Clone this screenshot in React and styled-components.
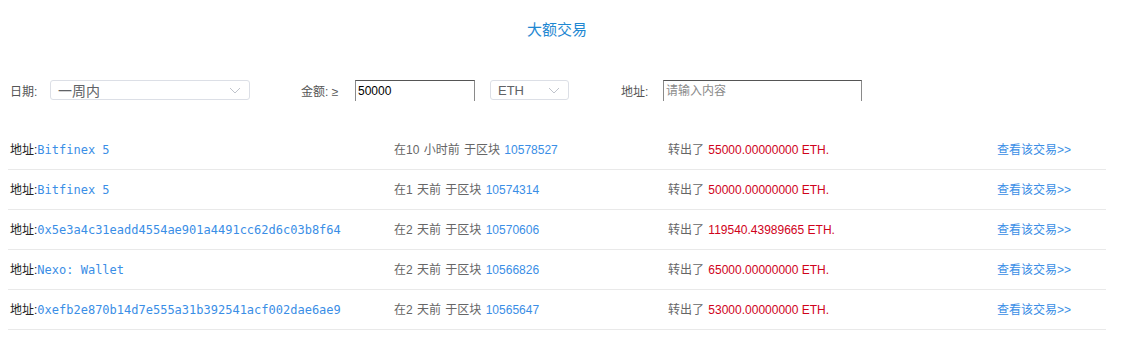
import React from "react";
import styled, { createGlobalStyle } from "styled-components";

const GlobalStyle = createGlobalStyle`
  body {
    margin: 8px;
    background: #fff;
    font-family: "Liberation Sans", "Noto Sans CJK SC", sans-serif;
  }
`;

const Page = styled.div`
  width: 1098px;
`;

const Title = styled.h2`
  margin: 0;
  height: 44px;
  line-height: 44px;
  text-align: center;
  font-size: 15px;
  font-weight: normal;
  color: #1f88d2;
`;

const FilterBar = styled.div`
  display: flex;
  align-items: center;
  margin-top: 27px;
  padding-left: 2px;
  height: 22px;
`;

const Field = styled.div`
  display: flex;
  align-items: center;
  margin-left: ${(p) => p.$offset || 0}px;
`;

const Label = styled.span`
  width: ${(p) => p.$width}px;
  font-size: 12px;
  color: #555;
  white-space: nowrap;
`;

const SelectBox = styled.div`
  box-sizing: border-box;
  width: ${(p) => p.$width}px;
  height: 20px;
  margin-left: ${(p) => p.$gap || 0}px;
  border: 1px solid #dcdfe6;
  border-radius: 3px;
  display: flex;
  align-items: center;
  justify-content: space-between;
  padding: 0 8px 0 7px;
  font-size: ${(p) => p.$size || 14}px;
  color: #606266;
`;

const TextInput = styled.input`
  box-sizing: border-box;
  width: ${(p) => p.$width}px;
  height: 21px;
  margin: 0;
  padding: 0 2px;
  border: 1px solid #8a8a8a;
  border-top-color: #555;
  border-bottom: none;
  outline: none;
  font-family: "Liberation Sans", "Noto Sans CJK SC", sans-serif;
  font-size: 12px;
  color: #000;
  &::placeholder {
    color: #8a8a8a;
  }
`;

const List = styled.div`
  margin-top: 29px;
`;

const Row = styled.div`
  display: grid;
  grid-template-columns: 386px 274px 329px 1fr;
  align-items: center;
  height: 36px;
  padding-bottom: 3px;
  border-bottom: 1px solid #e9e9e9;
  font-size: 12px;
`;

const AddressCell = styled.div`
  padding-left: 2px;
  color: #222;
  white-space: nowrap;
`;

const Mono = styled.span`
  font-family: "DejaVu Sans Mono", monospace;
  color: #3a8ee6;
`;

const Muted = styled.div`
  color: #666;
  white-space: nowrap;
  word-spacing: 1px;
`;

const Blue = styled.span`
  color: #3a8ee6;
`;

const Red = styled.span`
  color: #d0021b;
  word-spacing: 0;
`;

const Link = styled.a`
  color: #3a8ee6;
  text-decoration: none;
`;

const Chevron = () => (
  <svg width="12" height="7" viewBox="0 0 12 7">
    <polyline points="1,1 6,6 11,1" fill="none" stroke="#c0c4cc" strokeWidth="1" />
  </svg>
);

const rows = [
  { addr: "Bitfinex 5", time: "在10 小时前", block: "10578527", amount: "55000.00000000" },
  { addr: "Bitfinex 5", time: "在1 天前", block: "10574314", amount: "50000.00000000" },
  { addr: "0x5e3a4c31eadd4554ae901a4491cc62d6c03b8f64", time: "在2 天前", block: "10570606", amount: "119540.43989665" },
  { addr: "Nexo: Wallet", time: "在2 天前", block: "10566826", amount: "65000.00000000" },
  { addr: "0xefb2e870b14d7e555a31b392541acf002dae6ae9", time: "在2 天前", block: "10565647", amount: "53000.00000000" },
];

export default function App() {
  return (
    <Page>
      <GlobalStyle />
      <Title>大额交易</Title>
      <FilterBar>
        <Field>
          <Label $width={40}>日期:</Label>
          <SelectBox $width={200}>
            <span>一周内</span>
            <Chevron />
          </SelectBox>
        </Field>
        <Field $offset={51}>
          <Label $width={54}>金额: ≥</Label>
          <TextInput $width={120} defaultValue="50000" />
          <SelectBox $width={79} $gap={15} $size={13}>
            <span>ETH</span>
            <Chevron />
          </SelectBox>
        </Field>
        <Field $offset={52}>
          <Label $width={42}>地址:</Label>
          <TextInput $width={199} placeholder="请输入内容" />
        </Field>
      </FilterBar>
      <List>
        {rows.map((r, i) => (
          <Row key={i}>
            <AddressCell>
              地址:<Mono>{r.addr}</Mono>
            </AddressCell>
            <Muted>
              {r.time} 于区块 <Blue>{r.block}</Blue>
            </Muted>
            <Muted>
              转出了 <Red>{r.amount} ETH.</Red>
            </Muted>
            <div>
              <Link href="#">查看该交易&gt;&gt;</Link>
            </div>
          </Row>
        ))}
      </List>
    </Page>
  );
}
